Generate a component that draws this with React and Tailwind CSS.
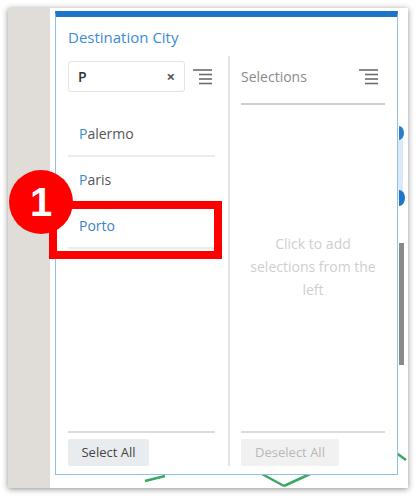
import React from "react";

const MenuIcon = ({ className = "" }) => (
  <svg width="20" height="17" viewBox="0 0 20 17" className={className}>
    <g stroke="#6b6b6b" strokeWidth="1.6">
      <line x1="0" y1="2" x2="19" y2="2" />
      <line x1="6" y1="6.5" x2="19" y2="6.5" />
      <line x1="6" y1="11" x2="19" y2="11" />
      <line x1="6" y1="15.5" x2="19" y2="15.5" />
    </g>
  </svg>
);

const cities = [
  { name: "Palermo", active: false },
  { name: "Paris", active: false },
  { name: "Porto", active: true },
];

export default function App() {
  return (
    <div
      className="relative w-[416px] h-[497px] bg-white overflow-hidden pt-[8px] pl-[8px]"
      style={{ fontFamily: '"Open Sans", "Noto Sans", sans-serif' }}
    >
      {/* screenshot frame */}
      <div className="relative flex w-[400px] h-[480px] bg-white shadow-[0_1px_6px_rgba(0,0,0,0.45)]">
        <div className="w-[42px] h-full bg-[#e0ddd8]" />
        <div className="relative flex-1 h-full bg-white">
          {/* map bits behind the panel */}
          <svg className="absolute left-0 top-0" width="358" height="480">
            <rect x="347" y="132" width="6" height="60" fill="#dbe9f7" />
            <path d="M349 118 a5 7 0 0 1 0 14 z" fill="#2a7fc8" />
            <path d="M349 182 a6 8 0 0 1 0 16 z" fill="#1d78c9" />
            <rect x="349" y="235" width="5" height="122" fill="#8a8a8a" />
            <g stroke="#3aa860" strokeWidth="2.5" fill="none">
              <line x1="95" y1="473" x2="115" y2="468" />
              <line x1="212" y1="466" x2="234" y2="478" />
              <line x1="234" y1="478" x2="260" y2="466" />
              <line x1="345" y1="444" x2="356" y2="452" />
            </g>
          </svg>

          {/* popup panel */}
          <div className="relative ml-[5px] mt-[3px] w-[343px] h-[464px] flex flex-col bg-white border border-[#8fc1e6] border-t-[6px] border-t-[#1c74c8]">
            <div className="pl-[12px] pt-[10px] text-[15px] leading-[20px] text-[#3b8bd2]">
              Destination City
            </div>

            <div className="flex flex-1 mt-[9px] pb-[8px]">
              {/* left column */}
              <div className="w-[172px] flex flex-col pl-[12px] pr-[12px]">
                <div className="flex items-center mt-[5px]">
                  <div className="w-[117px] h-[31px] flex items-center justify-between border border-[#e3e3e3] rounded-[3px] pl-[9px] pr-[9px]">
                    <span className="text-[14px] text-[#333] font-semibold">P</span>
                    <span className="text-[15px] text-[#555] font-bold leading-none">×</span>
                  </div>
                  <MenuIcon className="ml-[8px]" />
                </div>
                <div className="flex flex-col mt-[19px] w-[147px]">
                  {cities.map((c) => (
                    <div
                      key={c.name}
                      className="h-[46px] flex items-center pl-[11px] border-b-2 border-[#ececec] text-[14px]"
                    >
                      {c.active ? (
                        <span className="text-[#3c82c4]">{c.name}</span>
                      ) : (
                        <span className="text-[#555]">
                          <span className="text-[#3c8ad0]">{c.name[0]}</span>
                          {c.name.slice(1)}
                        </span>
                      )}
                    </div>
                  ))}
                </div>
                <div className="flex-1" />
                <div className="w-[147px] border-t-2 border-[#dcdcdc]" />
                <div className="mt-[6px] w-[81px] h-[27px] flex items-center justify-center bg-[#e9ecef] rounded-[2px] text-[13px] text-[#444]">
                  Select All
                </div>
              </div>

              {/* divider */}
              <div className="w-[2px] bg-[#e4e4e4]" />

              {/* right column */}
              <div className="flex-1 flex flex-col pl-[11px] pr-[12px]">
                <div className="flex items-center justify-between mt-[10px] pr-[6px]">
                  <span className="text-[14px] text-[#8a8a8a]">Selections</span>
                  <MenuIcon />
                </div>
                <div className="mt-[16px] border-t-2 border-[#d0d0d0]" />
                <div className="flex-1 flex items-center justify-center pb-[4px]">
                  <p className="text-center text-[14px] leading-[23px] text-[#cfcfcf]">
                    Click to add
                    <br />
                    selections from the
                    <br />
                    left
                  </p>
                </div>
                <div className="border-t-2 border-[#dcdcdc]" />
                <div className="mt-[6px] w-[98px] h-[27px] flex items-center justify-center bg-[#f1f1f1] rounded-[2px] text-[13px] text-[#b8b8b8]">
                  Deselect All
                </div>
              </div>
            </div>
          </div>
        </div>
      </div>

      {/* annotation overlay */}
      <div className="absolute left-[49px] top-[201px] w-[173px] h-[58px] border-[8px] border-[#ff0000]" />
      <div className="absolute left-[9px] top-[170px] w-[64px] h-[64px] rounded-full bg-[#ff0000] flex items-center justify-center">
        <span className="text-white text-[40px] font-bold leading-none" style={{ fontFamily: '"Liberation Sans", Arial, sans-serif' }}>
          1
        </span>
      </div>
    </div>
  );
}
